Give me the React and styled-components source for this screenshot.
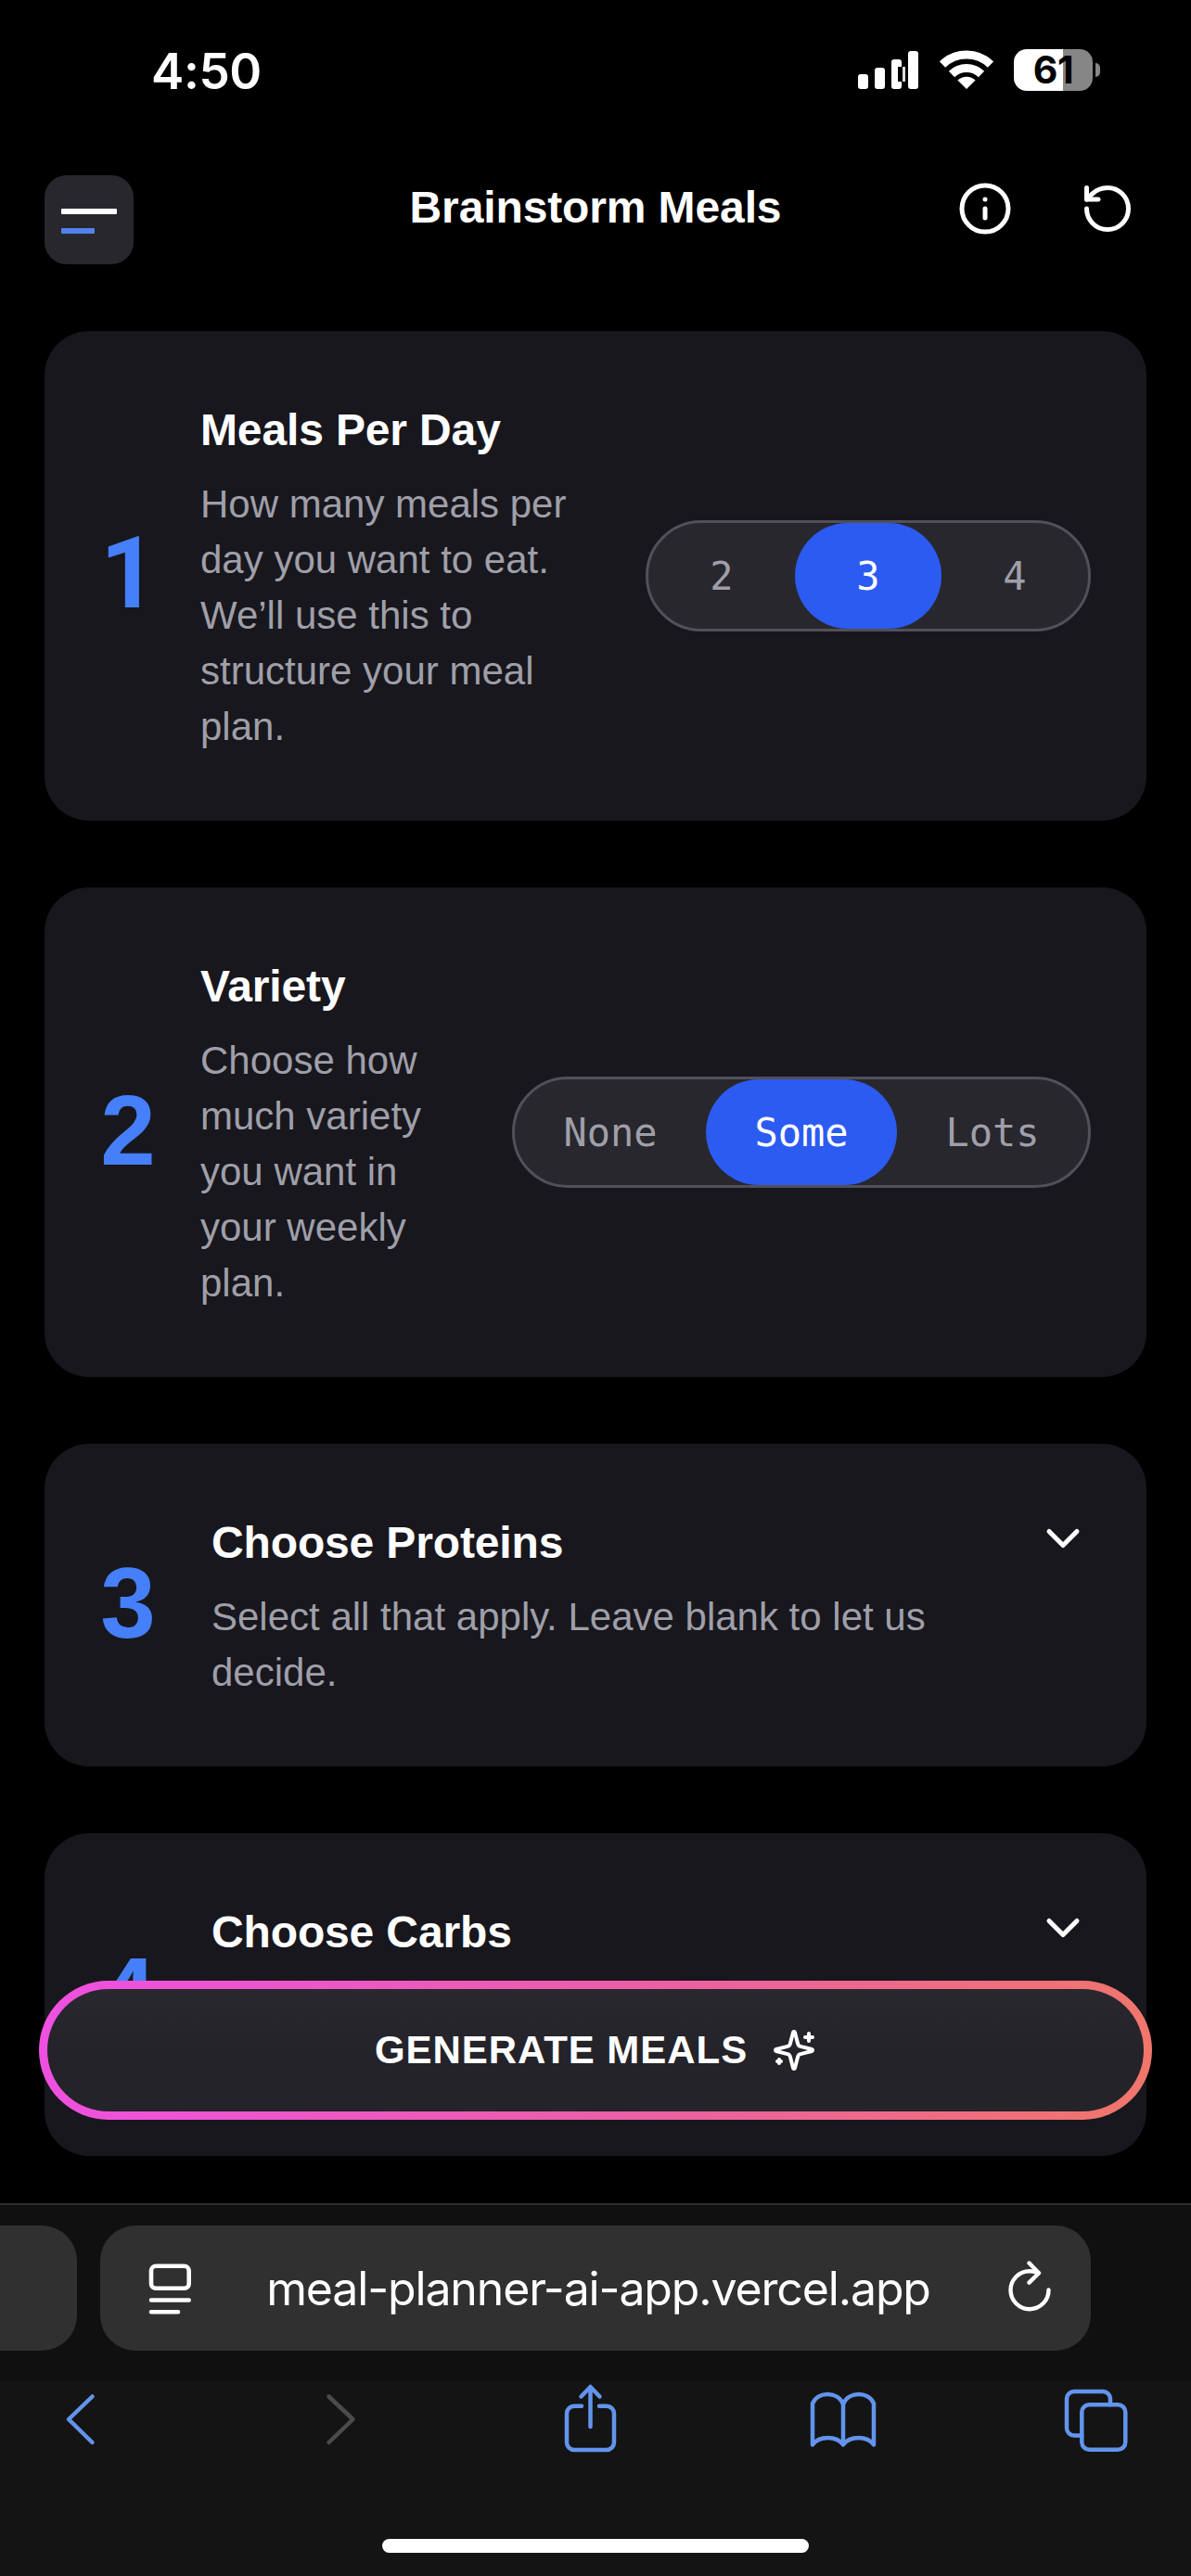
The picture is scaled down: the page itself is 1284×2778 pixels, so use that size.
import React from "react";
import styled, { createGlobalStyle } from "styled-components";
import { Info, RotateCcw, ChevronDown } from "lucide-react";

const GlobalStyle = createGlobalStyle`
  *, *::before, *::after { box-sizing: border-box; }
  html, body { margin: 0; padding: 0; background: #000; }
  button { font: inherit; color: inherit; background: none; border: 0; padding: 0; margin: 0; }
  h1, h2, p { margin: 0; }
  svg { display: block; flex: none; }
`;

const SANS = `"Liberation Sans", Arial, sans-serif`;
const SYSTEM = `Inter, "Liberation Sans", sans-serif`;
const MONO = `"DejaVu Sans Mono", "Liberation Mono", monospace`;

const Phone = styled.div`
  display: grid;
  grid-template-rows: 2376px 402px;
  width: 1284px;
  height: 2778px;
  overflow: hidden;
  background: #000;
  color: #fff;
  font-family: ${SANS};
`;

const Page = styled.div`
  position: relative;
  overflow: hidden;
`;

const StatusBar = styled.div`
  display: flex;
  justify-content: space-between;
  height: 141px;
  padding: 53px 98px 0 163px;
  font-family: ${SYSTEM};
`;

const Clock = styled.time`
  font-size: 53px;
  line-height: 48px;
  font-weight: 600;
  letter-spacing: -0.4px;
`;

const StatusIcons = styled.div`
  display: flex;
  align-items: flex-start;
`;

const Signal = styled.svg`
  margin: 2px 23px 0 0;
`;

const Wifi = styled.svg`
  margin: 1px 22px 0 0;
`;

const Battery = styled.div`
  display: flex;
  align-items: center;
  gap: 3px;
`;

const BatteryLevel = styled.div`
  width: 85px;
  height: 45px;
  border-radius: 14px;
  background: linear-gradient(to right, #fff 62%, #868686 62%);
  color: #000;
  font-size: 41px;
  line-height: 45px;
  font-weight: 700;
  letter-spacing: -0.5px;
  text-align: center;
`;

const BatteryCap = styled.div`
  width: 5px;
  height: 15px;
  border-radius: 0 5px 5px 0;
  background: #868686;
`;

const Header = styled.header`
  display: grid;
  grid-template-columns: 1fr auto 1fr;
  align-items: start;
  height: 168px;
  padding: 0 48px;
  margin-top: 48px;
`;

const MenuButton = styled.button`
  display: flex;
  flex-direction: column;
  align-items: flex-start;
  gap: 15px;
  width: 96px;
  height: 96px;
  padding: 36px 18px 0;
  border-radius: 24px;
  background: #28272e;
`;

const MenuLine = styled.span`
  width: ${(p) => p.$width}px;
  height: 6px;
  border-radius: 1px;
  background: ${(p) => p.$color};
`;

const PageTitle = styled.h1`
  font-size: 48px;
  line-height: 69px;
  font-weight: 700;
  letter-spacing: -0.12px;
`;

const Actions = styled.div`
  display: flex;
  justify-content: flex-end;
  gap: 72px;
  padding: 6px 12px 0 0;
`;

const Steps = styled.main`
  display: flex;
  flex-direction: column;
  gap: 72px;
  padding: 0 48px;
`;

const Card = styled.section`
  display: flex;
  align-items: center;
  padding: 72px 60px;
  border-radius: 48px;
  background: #18171d;
`;

const StepNumber = styled.div`
  flex: none;
  width: 60px;
  margin-right: ${(p) => p.$gap}px;
  padding-bottom: 5px;
  color: #457ffa;
  font-family: ${(p) => (p.$plainOne ? "Roboto, " : "")}${SANS};
  font-size: 107px;
  line-height: 120px;
  font-weight: 700;
  text-align: center;
`;

const StepText = styled.div`
  flex: 1;
  min-width: 0;
  min-height: 204px;
  margin-right: ${(p) => p.$gap}px;
`;

const StepTitle = styled.h2`
  margin-bottom: 16px;
  font-size: 48px;
  line-height: 69px;
  font-weight: 700;
  letter-spacing: -0.14px;
`;

const StepHint = styled.p`
  margin-bottom: -1px;
  color: #9f9fa9;
  font-size: 42px;
  line-height: 60px;
`;

const Segments = styled.div`
  display: flex;
  flex: none;
  height: 120px;
  border: 3px solid #515059;
  border-radius: 60px;
  background: #28272d;
  overflow: hidden;
`;

const Segment = styled.button`
  width: ${(p) => p.$width}px;
  padding-top: 2px;
  border-radius: 57px;
  background: ${(p) => (p.$active ? "#2c5bf2" : "transparent")};
  color: ${(p) => (p.$active ? "#fff" : "#9f9fa9")};
  font-family: ${MONO};
  font-size: 42px;
  line-height: 60px;
`;

const Expand = styled.button`
  align-self: flex-start;
`;

const GenerateButton = styled.button`
  position: absolute;
  left: 42px;
  bottom: 90px;
  display: flex;
  align-items: center;
  justify-content: center;
  gap: 26px;
  width: 1200px;
  height: 150px;
  border: 9px solid transparent;
  border-radius: 75px;
  background:
    linear-gradient(to bottom, #29282f, #242329 50%) padding-box,
    linear-gradient(97deg, #ee50e2 0%, #ec5fa4 55%, #f0766a 100%) border-box;
  font-size: 42px;
  line-height: 60px;
  font-weight: 700;
  letter-spacing: 0.95px;
`;

const Chrome = styled.div`
  display: flex;
  flex-direction: column;
  border-top: 2px solid #2d2d2d;
  background: linear-gradient(to bottom, #101010 190px, #141414 190px);
  font-family: ${SYSTEM};
`;

const TabStrip = styled.div`
  display: flex;
  gap: 25px;
  height: 157px;
  padding-top: 22px;
`;

const PreviousTab = styled.div`
  width: 83px;
  border-radius: 0 38px 38px 0;
  background: #303030;
`;

const AddressBar = styled.div`
  display: flex;
  align-items: center;
  justify-content: space-between;
  width: 1068px;
  padding: 0 40px 0 50px;
  border-radius: 38px;
  background: #303030;
`;

const Address = styled.span`
  font-size: 50px;
  line-height: 60px;
  font-weight: 400;
  letter-spacing: -1.15px;
  white-space: nowrap;
`;

const Toolbar = styled.nav`
  display: flex;
  justify-content: space-between;
  align-items: center;
  height: 80px;
  margin-top: 34px;
  padding: 0 64px 0 49px;
  color: #6294ec;
`;

const ToolButton = styled.button`
  display: grid;
  place-items: center;
  width: 76px;
  height: 80px;
  color: ${(p) => (p.$disabled ? "#4b4b4b" : "inherit")};
`;

const HomeIndicator = styled.div`
  width: 460px;
  height: 15px;
  margin: auto auto 25px;
  border-radius: 8px;
  background: #fff;
`;

const SignalBars = () => (
  <Signal width="65" height="41" viewBox="0 0 65 41" fill="#fff">
    <rect x="0" y="25" width="11" height="16" rx="3" />
    <rect x="18" y="18" width="11" height="23" rx="3" />
    <rect x="36" y="9" width="11" height="32" rx="3" />
    <rect x="54" y="0" width="11" height="41" rx="3" />
    <rect x="43" y="17" width="4" height="16" fill="#000" />
    <rect x="48" y="17" width="3" height="16" fill="#ddd" />
  </Signal>
);

const WifiWaves = () => (
  <Wifi width="58" height="42" viewBox="0 0 58 42" fill="none" stroke="#fff" strokeWidth="9">
    <path d="M3 15.5a37.5 37.5 0 0 1 52 0" />
    <path d="M13 26a23 23 0 0 1 32 0" />
    <path d="M29 42 19.4 32.6a14 14 0 0 1 19.2 0z" fill="#fff" stroke="none" />
  </Wifi>
);

const SparklesIcon = () => (
  <svg width="48" height="48" viewBox="0 0 24 24" fill="none" stroke="#fff" strokeWidth="2" strokeLinecap="round" strokeLinejoin="round">
    <path d="M9.937 15.5A2 2 0 0 0 8.5 14.063l-6.135-1.582a.5.5 0 0 1 0-.962L8.5 9.936A2 2 0 0 0 9.937 8.5l1.582-6.135a.5.5 0 0 1 .963 0L14.063 8.5A2 2 0 0 0 15.5 9.937l6.135 1.581a.5.5 0 0 1 0 .964L15.5 14.063a2 2 0 0 0-1.437 1.437l-1.582 6.135a.5.5 0 0 1-.963 0z" />
    <path d="M20 3v4M22 5h-4M4 17v2M5 18H3" />
  </svg>
);

const PageMenuIcon = () => (
  <svg width="50" height="58" viewBox="0 0 50 58" fill="none" stroke="#fff" strokeWidth="4.6" strokeLinecap="round">
    <rect x="5" y="4.8" width="40.700" height="24" rx="5" />
    <path d="M5 41.500h40.700M5 54.300h29" />
  </svg>
);

const ReloadIcon = () => (
  <svg width="54" height="60" viewBox="0 0 54 60" fill="none" stroke="#fff" strokeWidth="4.4" strokeLinecap="round" strokeLinejoin="round">
    <path d="M48.500 31.500a20.500 20.500 0 1 1-20.500-20.300c3.500 0 6.500.6 9 1.700" />
    <path d="M27.500 2.500 38 13.200 27.500 23.600" />
  </svg>
);

const ToolIcon = ({ width, children }) => (
  <svg width={width} height="80" viewBox={`0 0 ${width} 80`} fill="none" stroke="currentColor" strokeWidth="4.500" strokeLinecap="round" strokeLinejoin="round">
    {children}
  </svg>
);

const steps = [
  {
    title: "Meals Per Day",
    hint: "How many meals per day you want to eat. We’ll use this to structure your meal plan.",
    options: ["2", "3", "4"],
    selected: "3",
    optionWidth: 158,
  },
  {
    title: "Variety",
    hint: "Choose how much variety you want in your weekly plan.",
    options: ["None", "Some", "Lots"],
    selected: "Some",
    optionWidth: 206,
  },
  { title: "Choose Proteins", hint: "Select all that apply. Leave blank to let us decide." },
  { title: "Choose Carbs" },
];

export default function App() {
  return (
    <Phone>
      <GlobalStyle />
      <Page>
        <StatusBar>
          <Clock>4:50</Clock>
          <StatusIcons>
            <SignalBars />
            <WifiWaves />
            <Battery>
              <BatteryLevel>61</BatteryLevel>
              <BatteryCap />
            </Battery>
          </StatusIcons>
        </StatusBar>

        <Header>
          <MenuButton aria-label="Menu">
            <MenuLine $width={60} $color="#fff" />
            <MenuLine $width={36} $color="#5182ea" />
          </MenuButton>
          <PageTitle>Brainstorm Meals</PageTitle>
          <Actions>
            <Info size={60} />
            <RotateCcw size={60} />
          </Actions>
        </Header>

        <Steps>
          {steps.map((step, i) => (
            <Card key={step.title}>
              <StepNumber $gap={step.options ? 48 : 60} $plainOne={i === 0}>
                {i + 1}
              </StepNumber>
              <StepText $gap={step.options ? 60 : 0}>
                <StepTitle>{step.title}</StepTitle>
                {step.hint && <StepHint>{step.hint}</StepHint>}
              </StepText>
              {step.options ? (
                <Segments>
                  {step.options.map((o) => (
                    <Segment key={o} $width={step.optionWidth} $active={o === step.selected}>
                      {o}
                    </Segment>
                  ))}
                </Segments>
              ) : (
                <Expand aria-label="Expand">
                  <ChevronDown size={60} />
                </Expand>
              )}
            </Card>
          ))}
        </Steps>

        <GenerateButton>
          <span>GENERATE MEALS</span>
          <SparklesIcon />
        </GenerateButton>
      </Page>

      <Chrome>
        <TabStrip>
          <PreviousTab />
          <AddressBar>
            <PageMenuIcon />
            <Address>meal-planner-ai-app.vercel.app</Address>
            <ReloadIcon />
          </AddressBar>
        </TabStrip>
        <Toolbar>
          <ToolButton aria-label="Back">
            <ToolIcon width={40}>
              <path d="M32.500 15.500 7 40l25.500 25" />
            </ToolIcon>
          </ToolButton>
          <ToolButton aria-label="Forward" $disabled>
            <ToolIcon width={52}>
              <path d="M19.500 15.500 45.500 40l-26 25" />
            </ToolIcon>
          </ToolButton>
          <ToolButton aria-label="Share">
            <ToolIcon width={60}>
              <path d="M22 25.800h-8a8 8 0 0 0-8 8V65a8 8 0 0 0 8 8h35a8 8 0 0 0 8-8V33.800a8 8 0 0 0-8-8h-8" />
              <path d="M31.500 48V5.500M21.500 15.500l10-10.500 10 10.500" />
            </ToolIcon>
          </ToolButton>
          <ToolButton aria-label="Bookmarks">
            <ToolIcon width={76}>
              <path d="M39 24C34 10 12 9 6 23v44.500c7-10 26-10 33 0 7-10 26-10 33 0V23C66 9 44 10 39 24zv43" />
            </ToolIcon>
          </ToolButton>
          <ToolButton aria-label="Tabs">
            <ToolIcon width={72}>
              <rect x="20.300" y="24.300" width="47" height="48.400" rx="8" />
              <path d="M20.300 57.500H12a8 8 0 0 1-8-8V18a8 8 0 0 1 8-8h31a8 8 0 0 1 8 8v6.300" />
            </ToolIcon>
          </ToolButton>
        </Toolbar>
        <HomeIndicator />
      </Chrome>
    </Phone>
  );
}
